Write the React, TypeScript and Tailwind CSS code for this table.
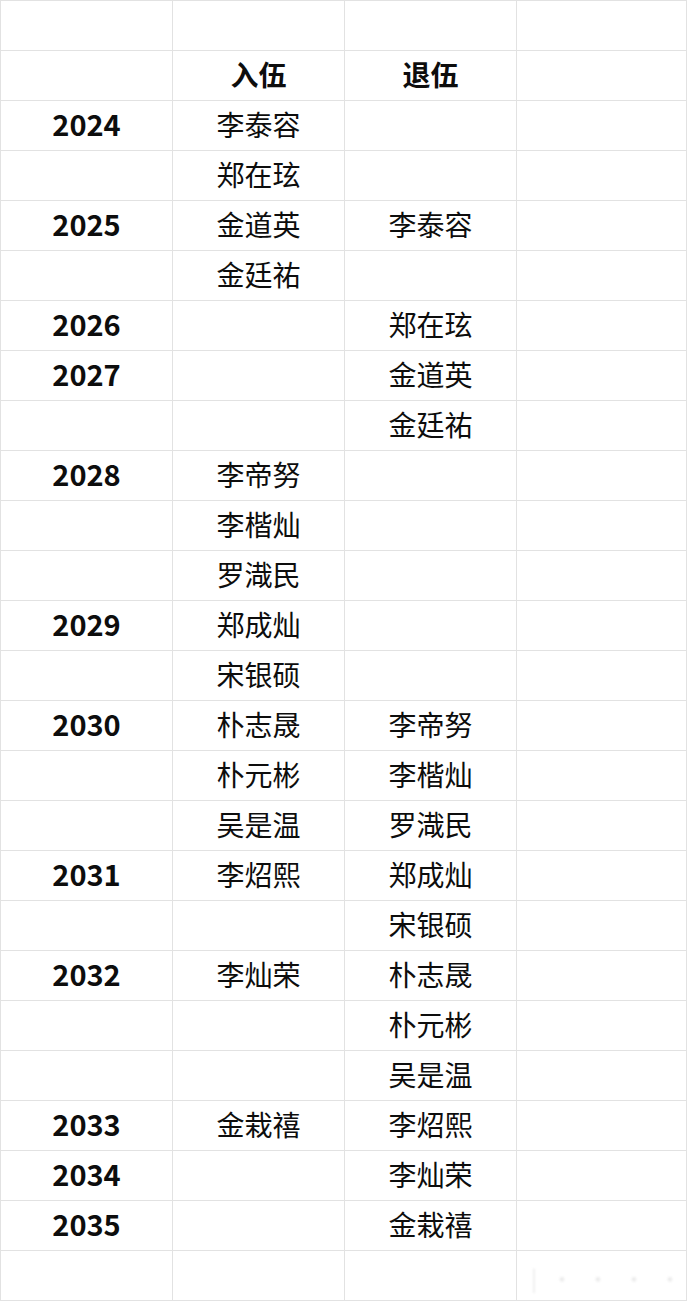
const rows: [string, string, string][] = [
  ['', '', ''],
  ['', '入伍', '退伍'],
  ['2024', '李泰容', ''],
  ['', '郑在玹', ''],
  ['2025', '金道英', '李泰容'],
  ['', '金廷祐', ''],
  ['2026', '', '郑在玹'],
  ['2027', '', '金道英'],
  ['', '', '金廷祐'],
  ['2028', '李帝努', ''],
  ['', '李楷灿', ''],
  ['', '罗渽民', ''],
  ['2029', '郑成灿', ''],
  ['', '宋银硕', ''],
  ['2030', '朴志晟', '李帝努'],
  ['', '朴元彬', '李楷灿'],
  ['', '吴是温', '罗渽民'],
  ['2031', '李炤熙', '郑成灿'],
  ['', '', '宋银硕'],
  ['2032', '李灿荣', '朴志晟'],
  ['', '', '朴元彬'],
  ['', '', '吴是温'],
  ['2033', '金栽禧', '李炤熙'],
  ['2034', '', '李灿荣'],
  ['2035', '', '金栽禧'],
  ['', '', ''],
]

export default function App() {
  return (
    <div className="relative w-[689px] h-[1302px] bg-white text-[#0d0d0d] font-['Noto_Sans_CJK_SC','Noto_Sans',sans-serif]">
      <div className="grid grid-cols-[172px_172px_172px_170px] w-[687px] border-t border-l border-[#e2e2e2]">
        {rows.map((r, i) => (
          <div key={i} className="contents">
            <div className="h-[50px] pb-[4px] border-r border-b border-[#e2e2e2] flex items-center justify-center text-[29px] font-bold leading-none">
              {r[0]}
            </div>
            <div className={`h-[50px] pb-[4px] border-r border-b border-[#e2e2e2] flex items-center justify-center text-[28px] leading-none ${i === 1 ? 'font-bold' : ''}`}>
              {r[1]}
            </div>
            <div className={`h-[50px] pb-[4px] border-r border-b border-[#e2e2e2] flex items-center justify-center text-[28px] leading-none ${i === 1 ? 'font-bold' : ''}`}>
              {r[2]}
            </div>
            <div className="h-[50px] border-r border-b border-[#e2e2e2]" />
          </div>
        ))}
      </div>
      <div className="absolute right-[8px] bottom-[8px] flex gap-[14px] text-[22px] text-[#ececec] blur-[1px] select-none">
        <span>|</span>
        <span>·</span>
        <span>·</span>
        <span>·</span>
        <span>·</span>
      </div>
    </div>
  )
}
